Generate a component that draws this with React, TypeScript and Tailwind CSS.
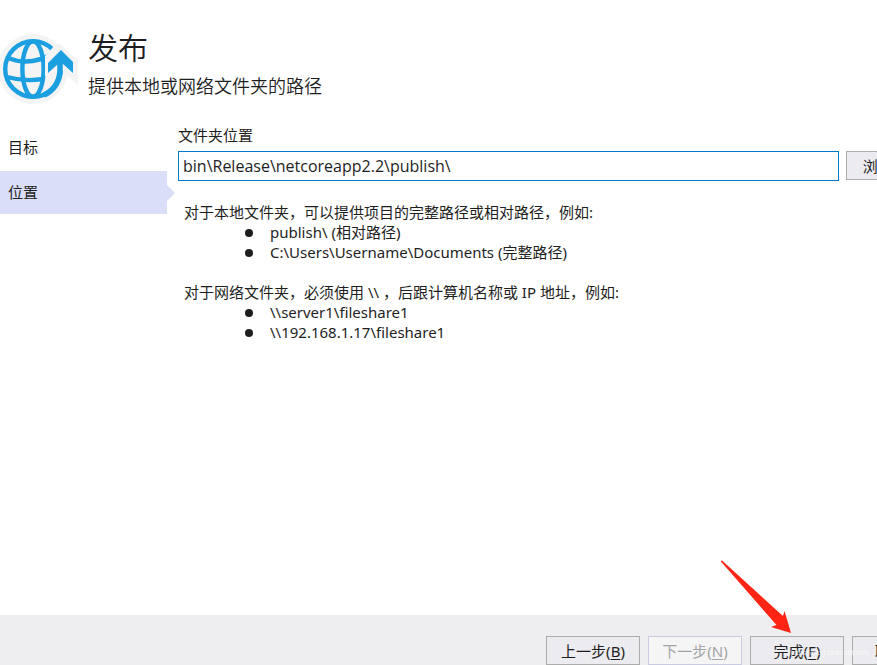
import React from "react";

function PublishIcon() {
  return (
    <svg viewBox="0 0 78 72" className="h-[72px] w-[78px] shrink-0" aria-hidden="true">
      <circle cx="33" cy="36" r="35" fill="#f4f4f5" />
      <path d="M46 14 L60 11 L78 27 V52 L68 43 L60 52 Z" fill="#f4f4f5" />
      <g fill="none" stroke="#1b9fe0" strokeWidth="4.4">
        <circle cx="33" cy="36" r="27.8" />
        <ellipse cx="33" cy="36" rx="10.6" ry="27.8" />
        <path d="M8 25 Q30 34 54 20" />
        <path d="M7 44 Q25 49 43 46" />
      </g>
      <path d="M55 12 L45 23 V43 H57 V38 H64 V20 Z" fill="#f4f4f5" />
      <path d="M60 30 V38 C59 50 53 58 44 62" fill="none" stroke="#1b9fe0" strokeWidth="5.5" />
      <path d="M48 30 L61 17 L73 29 V40 L63 31 H58 L48 40 Z" fill="#1b9fe0" />
    </svg>
  );
}

function DialogButton({
  label,
  accessKey,
  disabled = false,
}: {
  label: string;
  accessKey: string;
  disabled?: boolean;
}) {
  return (
    <button
      type="button"
      disabled={disabled}
      className="h-[29px] w-[94px] shrink-0 border border-[#acacac] bg-[#ebebf0] whitespace-nowrap disabled:border-[#c9cbe0] disabled:bg-[#f5f5f5] disabled:text-[#a2a4a5]"
    >
      {label}(<span className="underline underline-offset-2">{accessKey}</span>)
    </button>
  );
}

export default function App() {
  return (
    <div className="flex h-screen flex-col overflow-hidden bg-white font-['Noto_Sans','Noto_Sans_CJK_SC',sans-serif] text-[15px] leading-5 text-[#1e1e1e]">
      <header className="flex pt-[33px]">
        <PublishIcon />
        <div className="pl-[10px] font-['Noto_Sans_CJK_SC',sans-serif] font-[350]">
          <h1 className="text-[30px] leading-[26px]">发布</h1>
          <p className="pt-3 text-[18px] leading-7">提供本地或网络文件夹的路径</p>
        </div>
      </header>

      <div className="flex flex-1 pt-5">
        <nav className="w-[178px] shrink-0">
          <a href="#target" className="flex h-[46px] items-center pb-[2px] pl-2">
            目标
          </a>
          <a href="#location" aria-current="page" className="flex h-[43px] items-center">
            <span className="flex h-full w-[167px] items-center bg-[#dadef8] pb-[2px] pl-2">位置</span>
            <svg viewBox="0 0 8 16" className="h-4 w-2" aria-hidden="true">
              <path d="M0 0 L8 8 L0 16 Z" fill="#dadef8" />
            </svg>
          </a>
        </nav>

        <main className="min-w-0 flex-1">
          <label htmlFor="folder" className="block">
            文件夹位置
          </label>
          <div className="-mr-[51px] flex gap-[7px] pt-[6px]">
            <input
              id="folder"
              type="text"
              defaultValue={"bin\\Release\\netcoreapp2.2\\publish\\"}
              className="h-[30px] min-w-0 flex-1 border border-[#007acc] px-1 font-['Open_Sans',sans-serif] text-[16px] outline-none"
            />
            <button
              type="button"
              className="h-[29px] w-[82px] shrink-0 border border-[#acacac] bg-[#ebebf0] whitespace-nowrap"
            >
              浏览(<span className="underline">R</span>)
            </button>
          </div>

          <div className="pt-[21px] pl-[6px]">
            <p>对于本地文件夹，可以提供项目的完整路径或相对路径，例如:</p>
            <ul>
              <Example>publish\ (相对路径)</Example>
              <Example>C:\Users\Username\Documents (完整路径)</Example>
            </ul>
            <p className="pt-5">对于网络文件夹，必须使用 \\ ，后跟计算机名称或 IP 地址，例如:</p>
            <ul>
              <Example>\\server1\fileshare1</Example>
              <Example>\\192.168.1.17\fileshare1</Example>
            </ul>
          </div>
        </main>
      </div>

      <footer className="relative flex h-[50px] shrink-0 justify-end bg-[#eeeef0]">
        <div className="-mr-[69px] flex gap-2 pt-[21px]">
          <DialogButton label="上一步" accessKey="B" />
          <DialogButton label="下一步" accessKey="N" disabled />
          <DialogButton label="完成" accessKey="F" />
          <DialogButton label="取消" accessKey="C" />
        </div>
        <svg
          viewBox="0 0 72 74"
          className="absolute right-[85px] bottom-[31px] h-[74px] w-[72px]"
          aria-hidden="true"
        >
          <path d="M0.5 1 L2 0.5 L63 56 L64.5 51 L71 73 L51 67 L56.5 65 Z" fill="#ff2414" />
        </svg>
        <span className="pointer-events-none absolute right-2 bottom-[6px] font-['Liberation_Sans',sans-serif] text-[7px] leading-3 text-white/70">
          https://blog.csdn.net/sxily
        </span>
      </footer>
    </div>
  );
}

function Example({ children }: { children: React.ReactNode }) {
  return (
    <li className="flex items-center">
      <span className="mt-px mr-[17px] ml-[61px] size-2 rounded-full bg-[#1e1e1e]" />
      {children}
    </li>
  );
}
